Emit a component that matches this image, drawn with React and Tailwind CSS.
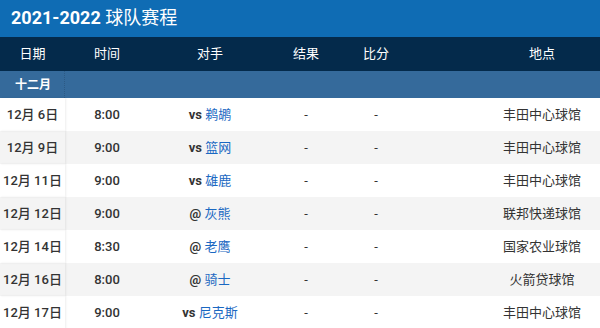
import React from "react";

const games = [
  { date: "12月 6日", time: "8:00", at: "vs", team: "鹈鹕", venue: "丰田中心球馆" },
  { date: "12月 9日", time: "9:00", at: "vs", team: "篮网", venue: "丰田中心球馆" },
  { date: "12月 11日", time: "9:00", at: "vs", team: "雄鹿", venue: "丰田中心球馆" },
  { date: "12月 12日", time: "9:00", at: "@", team: "灰熊", venue: "联邦快递球馆" },
  { date: "12月 14日", time: "8:30", at: "@", team: "老鹰", venue: "国家农业球馆" },
  { date: "12月 16日", time: "8:00", at: "@", team: "骑士", venue: "火箭贷球馆" },
  { date: "12月 17日", time: "9:00", at: "vs", team: "尼克斯", venue: "丰田中心球馆" },
];

const cols = "grid grid-cols-[65px_84px_122px_70px_70px_73px_116px] items-center";

const Schedule = () => {
  return (
    <div
      className="w-[600px] h-[328px] overflow-hidden bg-white text-[13px] text-[#333]"
      style={{ fontFamily: 'Roboto, "Noto Sans CJK SC", sans-serif' }}
    >
      {/* Title */}
      <div className="h-[37px] bg-[#0f6cb4] px-[11px] flex items-center">
        <h1 className="text-white text-[18px] font-bold pb-[3px]">
          2021-2022 <span className="font-normal">球队赛程</span>
        </h1>
      </div>

      {/* Column headers */}
      <div className={`${cols} h-[34px] bg-[#042a4b] text-white text-center`}>
        <div>日期</div>
        <div>时间</div>
        <div>对手</div>
        <div>结果</div>
        <div>比分</div>
        <div></div>
        <div>地点</div>
      </div>

      {/* Month */}
      <div className="h-[27px] bg-[#356a9b] flex items-center">
        <div className="w-[65px] h-full flex items-center pl-[15px] text-white text-[12px] font-bold border-r border-dotted border-[#2c5a85]">
          十二月
        </div>
      </div>

      {/* Rows */}
      {games.map((g, i) => (
        <div
          key={i}
          className={`${cols} h-[33px] text-center ${i % 2 === 1 ? "bg-[#f4f4f4]" : "bg-white"}`}
        >
          <div className="h-full flex items-center justify-center font-medium shadow-[1px_0_2px_rgba(0,0,0,0.07)]">
            {g.date}
          </div>
          <div className="font-medium">{g.time}</div>
          <div>
            <span className="font-bold">{g.at}</span>{" "}
            <a href="#" className="text-[#1a68c2]">{g.team}</a>
          </div>
          <div>-</div>
          <div>-</div>
          <div></div>
          <div>{g.venue}</div>
        </div>
      ))}
    </div>
  );
};

export default Schedule;
